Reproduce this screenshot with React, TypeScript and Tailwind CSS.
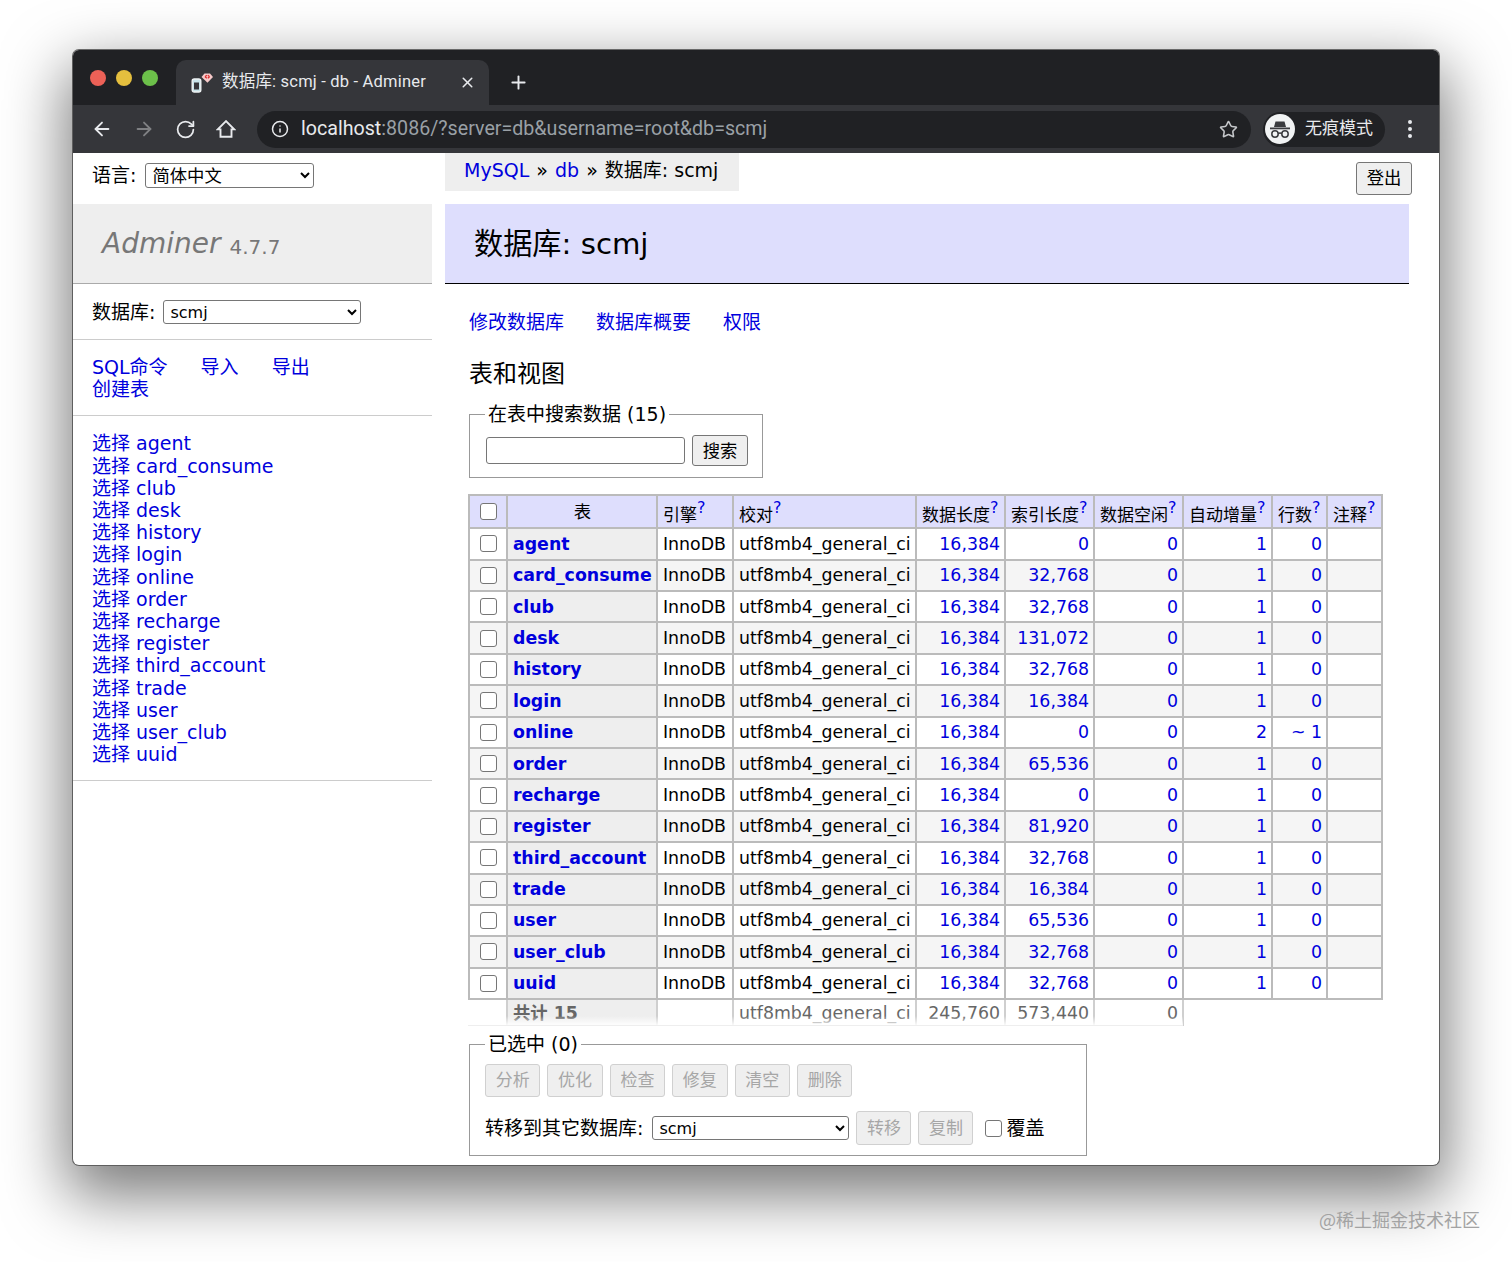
import { ArrowLeft, ArrowRight, RotateCw, Info, Star, Plus, X } from "lucide-react";

const tables: [string, string, string, string][] = [
  ["agent", "0", "1", "0"],
  ["card_consume", "32,768", "1", "0"],
  ["club", "32,768", "1", "0"],
  ["desk", "131,072", "1", "0"],
  ["history", "32,768", "1", "0"],
  ["login", "16,384", "1", "0"],
  ["online", "0", "2", "~ 1"],
  ["order", "65,536", "1", "0"],
  ["recharge", "0", "1", "0"],
  ["register", "81,920", "1", "0"],
  ["third_account", "32,768", "1", "0"],
  ["trade", "16,384", "1", "0"],
  ["user", "65,536", "1", "0"],
  ["user_club", "32,768", "1", "0"],
  ["uuid", "32,768", "1", "0"],
];

const widths = [38, 150, 76, 183, 89, 89, 89, 89, 55, 55];
const heads = ["引擎", "校对", "数据长度", "索引长度", "数据空闲", "自动增量", "行数", "注释"];
const font = { fontFamily: '"DejaVu Sans","Noto Sans CJK SC",sans-serif' };
const link = "text-[#0000dd]";
const cell = "border-2 border-[#bbbbbb] pl-[5px] pr-[4px] py-0 whitespace-nowrap text-[17.35px]";

function Check() {
  return <input type="checkbox" className="appearance-none block mx-auto w-[17px] h-[17px] bg-white border border-[#767676] rounded-[3px]" />;
}

function Disabled({ label, w, h }: { label: string; w: number; h: number }) {
  return (
    <button disabled style={{ width: w, height: h }} className="shrink-0 bg-[#efefef] border border-[#d0d0d0] rounded-[3px] text-[#a6a6a6] text-[17px]">
      {label}
    </button>
  );
}

function Incognito() {
  return (
    <svg viewBox="0 0 30 30" className="w-[30px] h-[30px]">
      <circle cx="15" cy="15" r="15" fill="#f1f3f4" />
      <path d="M10.5 7.5h9l1.5 5.5H9z" fill="#3a3b3f" />
      <rect x="5" y="13.5" width="20" height="1.8" fill="#3a3b3f" />
      <circle cx="10" cy="20" r="3.2" fill="none" stroke="#3a3b3f" strokeWidth="1.5" />
      <circle cx="20" cy="20" r="3.2" fill="none" stroke="#3a3b3f" strokeWidth="1.5" />
      <path d="M13 19.5q2-1 4 0" fill="none" stroke="#3a3b3f" strokeWidth="1.4" />
    </svg>
  );
}

function Favicon() {
  return (
    <svg viewBox="0 0 22 20" className="w-[22px] h-[20px]">
      <rect x="1.2" y="6" width="8.6" height="13" rx="2" fill="#c9e4ea" stroke="#eef2f3" strokeWidth="1.4" />
      <rect x="3" y="9.5" width="5" height="7" fill="#35363a" />
      <path d="M10.5 4l3-3.4h5.5l3 3.4-5.5 5.8z" fill="#f6c9c9" />
      <path d="M14 3.8l1.8-1.5M14 3.8l1.8 1.5M18.6 3.8l-1.8-1.5M18.6 3.8l-1.8 1.5" stroke="#d92b2b" strokeWidth="1.2" />
    </svg>
  );
}

function ChromeHome() {
  return (
    <svg viewBox="0 0 20 20" className="w-[20px] h-[20px]" fill="none" stroke="#e8eaed" strokeWidth="1.9" strokeLinejoin="miter">
      <path d="M10 2.2 1.8 10.4h2.7v7.4h11v-7.4h2.7z" />
    </svg>
  );
}

export default function App() {
  return (
    <div className="w-[1512px] h-[1262px] bg-white overflow-hidden pt-[50px] pl-[73px]" style={font}>
      <div className="w-[1366px] h-[1115px] rounded-[7px] overflow-hidden flex flex-col bg-white border border-[#5f5f5f] border-t-[#6a6a6a] shadow-[0_24px_62px_6px_rgba(0,0,0,0.52)] -mt-px -ml-px box-content">
        {/* tab strip */}
        <div className="h-[55px] bg-[#202124] flex items-end shrink-0 text-[#e8eaed]" style={{ fontFamily: 'Roboto,"Noto Sans CJK SC",sans-serif' }}>
          <div className="w-[103px] h-full flex gap-[10px] pl-[17px] pt-[20px]">
            <span className="w-4 h-4 rounded-full bg-[#ec6157]" />
            <span className="w-4 h-4 rounded-full bg-[#e5bf3e]" />
            <span className="w-4 h-4 rounded-full bg-[#6cc04a]" />
          </div>
          <div className="w-[313px] h-[45px] bg-[#35363a] rounded-t-[10px] flex items-center pl-[15px] pr-[13px] text-[16.5px]">
            <Favicon />
            <span className="ml-[9px] flex-1 tracking-[0.2px] whitespace-nowrap">数据库: scmj - db - Adminer</span>
            <X size={17} strokeWidth={2.2} />
          </div>
          <div className="h-[45px] flex items-center ml-[19px]">
            <Plus size={21} strokeWidth={2.2} />
          </div>
        </div>
        {/* toolbar */}
        <div className="h-[48px] bg-[#35363a] flex items-center shrink-0 text-[#e8eaed]" style={{ fontFamily: 'Roboto,"Noto Sans CJK SC",sans-serif' }}>
          <div className="w-[184px] flex items-center pl-[18px] gap-[20px]">
            <ArrowLeft size={22} strokeWidth={2} />
            <ArrowRight size={22} strokeWidth={2} className="text-[#7f8083]" />
            <RotateCw size={21} strokeWidth={2} />
            <ChromeHome />
          </div>
          <div className="w-[994px] h-[37px] rounded-full bg-[#202124] flex items-center pl-[14px] pr-[13px]">
            <Info size={18} strokeWidth={2} />
            <span className="ml-[12px] flex-1 text-[19.65px] whitespace-nowrap">
              localhost<span className="text-[#9aa0a6]">:8086/?server=db&amp;username=root&amp;db=scmj</span>
            </span>
            <Star size={19} strokeWidth={2} className="text-[#c4c6c9]" />
          </div>
          <div className="ml-[12px] w-[122px] h-[35px] rounded-full bg-[#202124] flex items-center pl-[2px] text-[17px] whitespace-nowrap">
            <Incognito />
            <span className="ml-[10px]">无痕模式</span>
          </div>
          <div className="ml-[23px] flex flex-col gap-[3px]">
            <span className="w-1 h-1 rounded-full bg-[#e8eaed]" />
            <span className="w-1 h-1 rounded-full bg-[#e8eaed]" />
            <span className="w-1 h-1 rounded-full bg-[#e8eaed]" />
          </div>
        </div>
        {/* page */}
        <div className="flex flex-1 min-h-0 overflow-hidden text-[19px] leading-[22.2px] text-black">
          <aside className="w-[359px] shrink-0">
            <div className="flex items-center pt-[10px] pl-[19px] gap-[9px]">
              <span>语言:</span>
              <select defaultValue="简体中文" className="w-[169px] h-[25px] pl-[2px] bg-white border border-[#767676] rounded-[3px] text-[17.35px]">
                <option>简体中文</option>
              </select>
            </div>
            <div className="mt-[16px] h-[80px] bg-[#eeeeee] border-b border-[#aaaaaa] pl-[29px] flex items-center">
              <span className="italic text-[28px] text-[#777777] relative top-[1px]">Adminer</span>
              <span className="ml-[9px] mt-[7px] text-[20px] text-[#777777]">4.7.7</span>
            </div>
            <div className="flex items-center pt-[16px] pb-[15px] pl-[19px] gap-[8px] border-b border-[#cccccc]">
              <span>数据库:</span>
              <select defaultValue="scmj" className="w-[198px] h-[24px] pl-[2px] bg-white border border-[#767676] rounded-[3px] text-[16px]">
                <option>scmj</option>
              </select>
            </div>
            <div className="pt-[16px] pb-[15px] pl-[19px] border-b border-[#cccccc]">
              <div className="flex gap-[33px]">
                <a className={link}>SQL命令</a>
                <a className={link}>导入</a>
                <a className={link}>导出</a>
              </div>
              <a className={`block ${link}`}>创建表</a>
            </div>
            <div className="pt-[16px] pb-[15px] pl-[19px] border-b border-[#cccccc]">
              {tables.map((t) => (
                <a key={t[0]} className={`block ${link}`}>选择 {t[0]}</a>
              ))}
            </div>
          </aside>
          <main className="flex-1 min-w-0 ml-[13px]">
            <div className="flex justify-between items-start h-[51px]">
              <div className="h-[38px] bg-[#eeeeee] pl-[19px] pr-[21px] pt-[6px]">
                <a className={link}>MySQL</a> <span className="mx-[1px]">»</span> <a className={link}>db</a> <span className="mx-[1px]">»</span> 数据库: scmj
              </div>
              <button className="mt-[9px] mr-[27px] w-[56px] h-[33px] bg-[#efefef] border border-[#767676] rounded-[3px] text-[17.35px]">登出</button>
            </div>
            <h2 className="mr-[30px] h-[80px] bg-[#deDEfd] border-b border-black pl-[29px] pt-[2px] flex items-center text-[29.2px] font-normal">数据库: scmj</h2>
            <div className="ml-[24px]">
              <div className="mt-[27px] flex gap-[32px]">
                <a className={link}>修改数据库</a>
                <a className={link}>数据库概要</a>
                <a className={link}>权限</a>
              </div>
              <h3 className="mt-[26px] text-[24px] leading-[30px] font-normal">表和视图</h3>
              <fieldset className="mt-[14px] w-[294px] h-[75px] border border-[#999999] pl-[16px] pr-[14px]">
                <legend className="px-[3px] -ml-[1px] text-[19px] leading-[22px]">在表中搜索数据 (15)</legend>
                <div className="flex items-center gap-[7px] mt-[10px]">
                  <input className="w-[199px] h-[27px] bg-white border border-[#767676] rounded-[3px]" />
                  <button className="w-[56px] h-[31px] bg-[#efefef] border border-[#767676] rounded-[3px] text-[17.35px]">搜索</button>
                </div>
              </fieldset>
              <div className="relative w-[914px] mt-[16px] -ml-px">
                <table className="table-fixed border-collapse w-[914px]">
                  <colgroup>
                    {widths.map((w, i) => (
                      <col key={i} style={{ width: w }} />
                    ))}
                  </colgroup>
                  <thead>
                    <tr className="h-[33px] bg-[#deDEfd]">
                      <td className={cell}><Check /></td>
                      <th className={`${cell} font-normal text-center`}>表</th>
                      {heads.map((h) => (
                        <th key={h} className={`${cell} font-normal text-left !text-[17px] !pt-[2px]`}>
                          <span className="relative top-[2px]">
                            {h}<sup className={`${link} text-[16px] leading-none`}>?</sup>
                          </span>
                        </th>
                      ))}
                    </tr>
                  </thead>
                  <tbody>
                    {tables.map((t, i) => (
                      <tr key={t[0]} className={`h-[31.4px] ${i % 2 ? "bg-[#f5f5f5]" : "bg-white"}`}>
                        <td className={cell}><Check /></td>
                        <th className={`${cell} text-left font-bold bg-[#eeeeee] ${link}`}>{t[0]}</th>
                        <td className={cell}>InnoDB</td>
                        <td className={cell}>utf8mb4_general_ci</td>
                        <td className={`${cell} text-right ${link}`}>16,384</td>
                        <td className={`${cell} text-right ${link}`}>{t[1]}</td>
                        <td className={`${cell} text-right ${link}`}>0</td>
                        <td className={`${cell} text-right ${link}`}>{t[2]}</td>
                        <td className={`${cell} text-right ${link}`}>{t[3]}</td>
                        <td className={cell}></td>
                      </tr>
                    ))}
                  </tbody>
                  <tfoot>
                    <tr className="h-[27px] text-[#666666] text-[17.35px]">
                      <td className="border-r-2 border-[#cfcfcf]"></td>
                      <th className="border-r-2 border-[#cfcfcf] bg-[#eeeeee] text-left pl-[5px] font-bold">共计 15</th>
                      <td className="border-r-2 border-[#cfcfcf]"></td>
                      <td className="border-r-2 border-[#cfcfcf] pl-[5px]">utf8mb4_general_ci</td>
                      <td className="border-r-2 border-[#cfcfcf] pr-[4px] text-right">245,760</td>
                      <td className="border-r-2 border-[#cfcfcf] pr-[4px] text-right">573,440</td>
                      <td className="border-r-2 border-[#cfcfcf] pr-[4px] text-right">0</td>
                      <td></td>
                      <td></td>
                      <td></td>
                    </tr>
                  </tfoot>
                </table>
                <div className="absolute left-0 bottom-0 w-[715px] h-[10px] bg-gradient-to-b from-white/0 to-white/90 border-b border-[#eeeeee]" />
              </div>
              <fieldset className="mt-[7px] w-[618px] h-[123px] border border-[#999999] px-[15px]">
                <legend className="px-[3px] text-[19px] leading-[22px]">已选中 (0)</legend>
                <div className="flex gap-[7px] mt-[9px]">
                  {["分析", "优化", "检查", "修复", "清空", "删除"].map((l) => (
                    <Disabled key={l} label={l} w={55.4} h={33} />
                  ))}
                </div>
                <div className="flex items-center mt-[14px]">
                  <span className="whitespace-nowrap">转移到其它数据库:</span>
                  <select defaultValue="scmj" className="ml-[9px] w-[197px] h-[24px] pl-[2px] bg-white border border-[#767676] rounded-[3px] text-[16px]">
                    <option>scmj</option>
                  </select>
                  <div className="ml-[7px] flex gap-[7px]">
                    <Disabled label="转移" w={55} h={34} />
                    <Disabled label="复制" w={55} h={34} />
                  </div>
                  <span className="ml-[12px]"><Check /></span>
                  <span className="ml-[4px]">覆盖</span>
                </div>
              </fieldset>
            </div>
          </main>
        </div>
      </div>
      <div className="mt-[42px] pr-[32px] text-right text-[18px] leading-[22px] text-[#a3a3a3]" style={{ fontFamily: '"Noto Sans CJK SC",sans-serif' }}>
        @稀土掘金技术社区
      </div>
    </div>
  );
}
